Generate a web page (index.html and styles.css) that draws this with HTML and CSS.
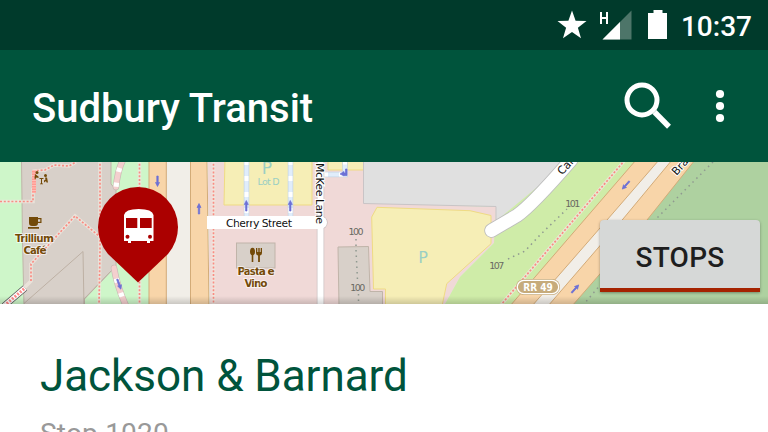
FILE: index.html
```html
<!DOCTYPE html>
<html lang="en">
<head>
<meta charset="utf-8">
<title>Sudbury Transit</title>
<link rel="stylesheet" href="styles.css">
</head>
<body>
<div class="status">
  <svg class="status-icons" viewBox="552 0 120 50" width="120" height="50">
    <path fill="#fff" d="M572 10.500l3.600 10.200 10.900.3-8.600 6.700 3.100 10.500-9-6.200-9 6.200 3.100-10.500-8.600-6.700 10.900-.3z"/>
    <path fill="#4d7569" d="M631.500 10.500V39.500H602.500z"/>
    <path fill="#fff" d="M620 22V39.500H602.500z"/>
    <path fill="none" stroke="#fff" stroke-width="2" d="M601 12v12M607 12v12M601 18h6"/>
    <path fill="#fff" d="M653.500 10h9v3h4.500v26h-19V13h5.500z"/>
  </svg>
  <span class="clock">10:37</span>
</div>
<header class="toolbar">
  <h1 class="title">Sudbury Transit</h1>
  <svg class="search" viewBox="0 0 50 50" width="50" height="50">
    <circle cx="25" cy="24" r="15" fill="none" stroke="#fff" stroke-width="5"/>
    <path d="M37.500 36L52 50.700" stroke="#fff" stroke-width="5.500"/>
  </svg>
  <svg class="more" viewBox="0 0 10 34" width="10" height="34" fill="#fff">
    <circle cx="5" cy="5" r="4.100"/><circle cx="5" cy="17" r="4.100"/><circle cx="5" cy="29" r="4.100"/>
  </svg>
</header>
<section class="map">
  <svg class="tiles" viewBox="0 162 768 142" width="768" height="142">
    <rect y="162" width="768" height="142" fill="#cef6c9"/>
    <path class="building" d="M21.500 160H111V184L116 190V266L84.500 299V306H24L22.500 240z"/>
    <path class="edge" d="M24 303.500L83 251.500 84 306M84 299L112 270"/>
    <path class="path-case" d="M100 160V250L99 306M139.500 160V306M0 201.500H33V188M33 177L34 171 45 170 54 165 69 166 76 162M8 304L31 281 31 264 75 216 99 236"/>
    <path class="path-dash" d="M100 160V250L99 306M139.500 160V306M0 201.500H33V188M33 171L45 170 54 165 69 166 76 162M31 281V264L75 216 99 236"/>
    <path d="M34 170V193" stroke="#ff9b93" stroke-width="4"/>
    <path d="M34 170V193" stroke="#ffc0b8" stroke-width="4" stroke-dasharray="1 1.500"/>
    <path d="M4 306L25 288" stroke="#555" stroke-width="6.500"/><path d="M4 306L25 288" stroke="#fff" stroke-width="5"/>
    <path d="M4 306L25 288" stroke="#f88" stroke-width="3" stroke-dasharray="2 1.500"/>
    <path class="track-case" d="M124 158Q118 168 116 187M114 268Q117 286 126 306"/>
    <path class="track" d="M124 158Q118 168 116 187M114 268Q117 286 126 306"/>
    <path class="track-gap" d="M124 158Q118 168 116 187M114 268Q117 286 126 306"/>

    <rect x="166" y="162" width="25" height="142" fill="#f1eee8"/>
    <path class="highway" d="M149 160H166.300V306H149zM190.500 160H207L209 306H190.500z"/>
    <path fill="#f0d9d7" d="M207.500 160H364V203L496 207 495 242 460 277 444 306H209.500z"/>
    <path class="path-case" d="M213.500 160V306"/><path class="path-dash" d="M213.500 160V306"/>
    <path class="parking" d="M225 158H312V205H224zM328 158H363.500V170H328z"/>
    <g fill="none"><path stroke="#c6d5e2" stroke-width="5.500" d="M246.500 160V217M290.500 160V217M323 174.500H345V160"/>
    <path stroke="#e0edfb" stroke-width="4" d="M246.500 160V217M290.500 160V217M323 174.500H345V160"/>
    <path stroke="#fff" stroke-width="4" stroke-dasharray="5 11" d="M246.500 160V217M290.500 160V217M323 174.500H345V160"/></g>
    <path fill="none" stroke="#ccc2c2" stroke-width="7.500" d="M320.500 160V306"/>
    <circle cx="321" cy="222.500" r="6.700" fill="#ccc2c2"/>
    <path fill="none" stroke="#fff" stroke-width="6" d="M320.500 160V306"/>
    <path fill="none" stroke="#fff" stroke-width="13" d="M207 222.500H321"/>
    <circle cx="321" cy="222.500" r="6" fill="#fff"/>
    <path class="building" d="M338 247L368.500 246.500 370 291.500H382.500V306H339z"/>
    <rect class="building" x="236.500" y="243" width="38.500" height="25"/>
    <path fill="#e0e0e0" stroke="#c9c4c6" d="M363.500 158V203.500L496 206.500 496 222 540 200 580 158z"/>
    <path fill="#cfeca8" d="M495 222L570 160H640L515 306H444L460 277 494 243z"/>
    <path class="parking" d="M377 207.300L470 210.700 491 215.500V243.700L446.700 283.700 442 306H385.500V289H373.500L371.700 217z"/>
    <g fill="none" stroke-linecap="round" stroke-linejoin="round">
      <path stroke="#bdbdbd" stroke-width="14.500" d="M491.500 230.500L517 215.500Q532 205 571 160"/>
      <path stroke="#fff" stroke-width="12.800" d="M491.500 230.500L517 215.500Q532 205 571 160"/>
    </g>
    <path fill="#aed1a0" d="M694 160H768V306H572z"/>
    <path fill="#f1eee8" d="M645 160H682L562 306H522z"/>
    <path class="path-case" d="M625 160L500 306"/><path class="path-dash" d="M625 160L500 306"/>
    <path class="highway" d="M636 160L510 306H532L607 220 659 160zM672 160L623 219 548 306H572L647 220 695 160z"/>
    <g fill="none" stroke="#8f9990" stroke-width="1.500" stroke-dasharray="1.500 4">
      <path d="M508 259L525 251 540 235 567 209"/><path d="M713 162L687 188 657 218 590 297 584 304"/>
      <path d="M356 239V250L357.500 280M358.500 294V304"/>
    </g>

    <g class="arrows">
      <path d="M-.7-5H.7V1.500H2L0 5.500-2 1.500H-.7z" transform="translate(157.500 181)"/>
      <path d="M-.7 5H.7V-1.500H2L0-5.500-2-1.500H-.7z" transform="translate(199 209)"/>
      <path d="M-.7 5H.7V-1.500H2L0-5.500-2-1.500H-.7z" transform="translate(246.300 206)"/>
      <path d="M-.7 5H.7V-1.500H2L0-5.500-2-1.500H-.7z" transform="translate(290.300 206)"/>
      <path d="M-.7-5H.7V1.500H2L0 5.500-2 1.500H-.7z" transform="translate(119 284) rotate(-20)"/>
      <path d="M-.7-5H.7V1.500H2L0 5.500-2 1.500H-.7z" transform="translate(626 185) rotate(42)"/>
      <path d="M-.7 5H.7V-1.500H2L0-5.500-2-1.500H-.7z" transform="translate(575 289) rotate(42)"/>
      <path d="M345.500 169H347V175.500H344V176L340 174 344 171.500V173H345.500z"/>
    </g>

    <g fill="#734a08">
      <path d="M29 217H38V218H41.500V223H38Q38 226 35 226H32Q29 226 29 223zM38 219.300V221.800H40.300V219.300zM28 227H39V228.700H28z" fill-rule="evenodd"/>
      <circle cx="37" cy="172.500" r="1.500"/><circle cx="45.500" cy="175.500" r="1.500"/>
      <path d="M35 174L38.500 176.500 38.500 178 36.500 177.500 35 179.500 34.500 178zM39.500 178H43.500V179H42V183.500H43V184.300H40V183.500H41V179H39.500zM45 177.500H47L48 182.500H46.500L46 181 44 182.500V180.500L45.500 179.500z"/>
      <ellipse cx="252.500" cy="251.500" rx="2.500" ry="3.800"/><path d="M251.700 254H253.300V262H251.700z"/>
      <path d="M256 248H257.300V252H258.300V248H259.700V252H260.700V248H262V253Q262 255 259.900 255.500V262H258.100V255.500Q256 255 256 253z"/>
    </g>

    <g class="poi">
      <text x="34.500" y="241.500" textLength="39">Trillium</text><text x="35" y="253.500" textLength="23">Café</text>
      <text x="256" y="274.500" textLength="37">Pasta e</text><text x="256" y="286.500" textLength="23">Vino</text>
    </g>
    <g class="street">
      <text x="226" y="227" textLength="66">Cherry Street</text>
      <text transform="translate(315.500 163) rotate(90)" textLength="61">McKee Lane</text>
      <text transform="translate(562 175.500) rotate(-47)">Car</text>
      <text transform="translate(676.500 176) rotate(-48)">Bra</text>
    </g>
    <g class="lot"><text x="267" y="174" font-size="17">P</text><text x="268.500" y="184.500" font-size="9.500" textLength="22">Lot D</text><text x="423" y="262.500" font-size="16">P</text></g>
    <g class="house"><text x="356" y="235.300" textLength="15">100</text><text x="357.800" y="290.700" textLength="15">100</text><text x="572.800" y="207.300" textLength="15">101</text><text x="496.800" y="269" textLength="15">107</text></g>
    <rect x="516" y="279" width="44" height="16" rx="8" fill="#c6ab7b"/>
    <rect x="517.300" y="280.300" width="41.400" height="13.400" rx="6.700" fill="#c6ab7b" stroke="#fff" stroke-width="1.300"/>
    <text class="shield" x="538" y="291" textLength="29.500" lengthAdjust="spacingAndGlyphs">RR 49</text>

    <path fill="#ab0000" d="M138 282.500L108 254Q98 242 98 227A40 40 0 0 1 178 227Q178 242 168 254z"/>
    <path fill="#fff" fill-rule="evenodd" d="M124 215Q125 209 138.700 209T153.500 215V241H150V243H147V241H131V243H128V241H124zM126 218V228H137.300V218zM140 218V228H151.700V218z"/>
    <circle cx="127.500" cy="236.800" r="2" fill="#ab0000"/><circle cx="150" cy="236.800" r="2" fill="#ab0000"/>
  </svg>
  <button class="stops">STOPS</button>
</section>
<main class="stop">
  <h2 class="stop-name">Jackson &amp; Barnard</h2>
  <p class="stop-id">Stop 1020</p>
</main>
</body>
</html>
```
FILE: styles.css
```css
* { box-sizing: border-box; }
body {
  margin: 0;
  width: 768px;
  height: 432px;
  overflow: hidden;
  background: #fff;
  font-family: Roboto, sans-serif;
}
.status {
  display: flex;
  height: 50px;
  padding-right: 16px;
  align-items: center;
  justify-content: flex-end;
  gap: 9px;
  background: #003a2b;
  color: #fff;
}
.clock { font-size: 28px; font-weight: 500; line-height: 50px; padding-top: 3px; }
.toolbar {
  display: flex;
  height: 112px;
  align-items: center;
  padding: 0 43px 0 32px;
  background: #00543c;
  color: #fff;
}
.title { margin: 0; flex: 1; font-size: 40px; font-weight: 500; line-height: 48px; padding-top: 6px; }
.search { overflow: visible; margin: 0 48px 10px 0; }
.map { position: relative; height: 142px; }
.tiles { display: block; }
.map::after {
  content: "";
  position: absolute;
  inset: auto 0 0;
  height: 8px;
  background: linear-gradient(transparent, rgba(0, 0, 0, .16));
}
.building { fill: #d8d0c9; stroke: #c0b4a9; }
.edge { fill: none; stroke: #bdb0a4; }
.path-case { fill: none; stroke: #f0e8df; stroke-width: 3.5; stroke-opacity: .75; }
.path-dash { fill: none; stroke: #f98c83; stroke-width: 1.7; stroke-dasharray: 2 1.8; }
.track-case, .track, .track-gap { fill: none; stroke-width: 6.5; stroke: #c9b9b5; stroke-linecap: round; }
.track { stroke: #f4cfce; stroke-width: 5.2; }
.track-gap { stroke: #fff; stroke-width: 5.2; stroke-dasharray: 4 11; stroke-dashoffset: 4; stroke-linecap: butt; }
.highway { fill: #f8d5a9; stroke: #d3ab78; }
.parking { fill: #f6eeb6; stroke: #efdb83; }
.arrows { fill: #6c70d5; stroke: #6c70d5; stroke-width: .7; }
.poi, .shield { font: bold 10.5px "DejaVu Sans", sans-serif; text-anchor: middle; fill: #734a08; }
.poi { stroke: rgba(255, 255, 255, .6); stroke-width: 2px; paint-order: stroke; }
.shield { fill: #fff; }
.street { font: 11px "DejaVu Sans", sans-serif; fill: #111; stroke: #fff; stroke-width: 2px; paint-order: stroke; }
.lot { font-family: "DejaVu Sans", sans-serif; fill: #9bcfc4; text-anchor: middle; }
.house { font: 9.5px "DejaVu Sans", sans-serif; fill: #6a6a62; text-anchor: middle; }
.stops {
  position: absolute;
  z-index: 1;
  right: 8px;
  bottom: 12px;
  width: 160px;
  height: 72px;
  padding: 7px 0 0;
  border: 0;
  border-bottom: 4px solid #a52300;
  border-radius: 4px 4px 0 0;
  background: #d6d8d7;
  box-shadow: 0 1px 3px rgba(0, 0, 0, .35);
  color: #1e1e1e;
  font: 500 28px Roboto, sans-serif;
  letter-spacing: .3px;
}
.stop { padding: 44px 40px 0; }
.stop-name { margin: 0; font-size: 44px; font-weight: 400; line-height: 56px; letter-spacing: -.05px; color: #00543c; }
.stop-id { margin: 12px 0 0; font-size: 28px; line-height: 36px; letter-spacing: .2px; color: #999; white-space: nowrap; }
```
